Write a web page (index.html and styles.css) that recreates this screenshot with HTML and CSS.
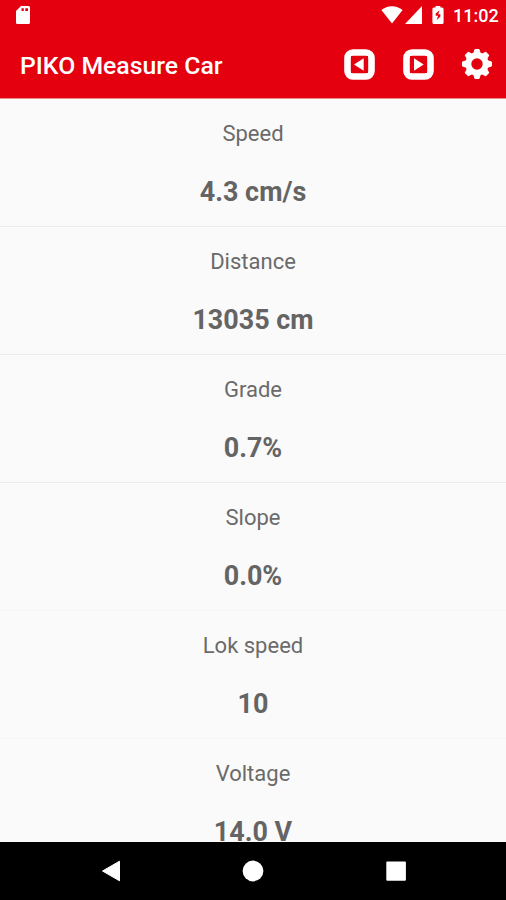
FILE: index.html
```html
<!DOCTYPE html>
<html lang="en">
<head>
<meta charset="utf-8">
<title>PIKO Measure Car</title>
<link rel="stylesheet" href="styles.css">
</head>
<body>
<div class="screen">
  <header class="header">
    <div class="status">
      <svg class="sd" width="14" height="18" viewBox="0 0 14 18"><path fill="#fff" fill-rule="evenodd" d="M5 0h7.500q1.500 0 1.500 1.500v15q0 1.500-1.500 1.500h-11q-1.500 0-1.500-1.500V5zM5.500 2.300v2.800h2.300v-2.800zM9.300 2.300v2.800h2.700v-2.800z"/></svg>
      <svg class="wifi" width="22" height="18" viewBox="0 0 22 18"><path fill="#fff" d="M11 17.500.4 4Q5 .2 11 .2T21.600 4z"/></svg>
      <svg class="signal" width="17" height="18" viewBox="0 0 17 18"><path fill="#fff" d="M17 0v18H0z"/></svg>
      <svg class="battery" width="12" height="18" viewBox="0 0 12 18"><path fill="#fff" fill-rule="evenodd" d="M3.600 0h4.800v1.500h1.700q1.500 0 1.500 1.500v13.500q0 1.500-1.500 1.500H1.900Q.4 18 .4 16.500V3q0-1.500 1.500-1.500h1.700zM7.600 4.200 3.700 7.500v2.300h2.400L4.600 14.200 8.400 10.600V8.200H6.200z"/></svg>
      <span class="clock">11:02</span>
    </div>
    <div class="toolbar">
      <h1 class="title">PIKO Measure Car</h1>
      <svg class="prev" width="31" height="31" viewBox="0 0 31 31"><rect x="3.500" y="3.500" width="24" height="24" rx="5.500" fill="none" stroke="#fff" stroke-width="6.600"/><path class="hole" d="M7 7h17v17H7z"/><path fill="#fff" d="M19.700 9.300v12.400L10 15.500z"/></svg>
      <svg class="next" width="31" height="31" viewBox="0 0 31 31"><rect x="3.500" y="3.500" width="24" height="24" rx="5.500" fill="none" stroke="#fff" stroke-width="6.600"/><path class="hole" d="M7 7h17v17H7z"/><path fill="#fff" d="M11 9.300v12.400l9.700-6.200z"/></svg>
      <svg class="gear" width="36" height="36" viewBox="-18 -18 36 36">
        <defs><path id="tooth" fill="#fff" stroke="#fff" stroke-linejoin="round" d="M-3.400-10l1.300-4.500h4.200l1.300 4.500z"/></defs>
        <circle r="8.700" fill="none" stroke="#fff" stroke-width="6"/>
        <use href="#tooth"/>
        <use href="#tooth" transform="rotate(45)"/>
        <use href="#tooth" transform="rotate(90)"/>
        <use href="#tooth" transform="rotate(135)"/>
        <use href="#tooth" transform="rotate(180)"/>
        <use href="#tooth" transform="rotate(225)"/>
        <use href="#tooth" transform="rotate(270)"/>
        <use href="#tooth" transform="rotate(315)"/>
      </svg>
    </div>
  </header>
  <main class="list">
    <section class="row"><div class="label">Speed</div><div class="value">4.3 cm/s</div></section>
    <section class="row"><div class="label">Distance</div><div class="value">13035 cm</div></section>
    <section class="row"><div class="label">Grade</div><div class="value">0.7%</div></section>
    <section class="row faint"><div class="label">Slope</div><div class="value">0.0%</div></section>
    <section class="row faint"><div class="label">Lok speed</div><div class="value">10</div></section>
    <section class="row"><div class="label">Voltage</div><div class="value">14.0 V</div></section>
  </main>
  <nav class="nav">
    <svg width="22" height="22" viewBox="0 0 22 22"><path fill="#fff" stroke="#fff" stroke-linejoin="round" d="M19.500 1.200v19.600L2.500 11z"/></svg>
    <svg width="22" height="22" viewBox="0 0 22 22"><circle cx="11" cy="11" r="10.400" fill="#fff"/></svg>
    <svg width="22" height="22" viewBox="0 0 22 22"><rect x="1.300" y="1.500" width="19.600" height="19.300" rx="1" fill="#fff"/></svg>
  </nav>
</div>
</body>
</html>
```
FILE: styles.css
```css
body {
  margin: 0;
  font-family: Roboto, "Liberation Sans", sans-serif;
}
.screen {
  display: flex;
  flex-direction: column;
  height: 900px;
  overflow: hidden;
  background: #fafafa;
}
.header {
  flex: none;
  height: 98px;
  background: #e4000f;
  color: #fff;
  border-bottom: 1px solid #ee8a8c;
}
.status {
  display: flex;
  align-items: center;
  height: 30px;
  padding: 0 9px 0 16px;
}
.wifi { margin-left: auto; }
.signal { margin-left: 2px; }
.battery { margin-left: 10px; }
.clock {
  width: 44px;
  margin-left: 9px;
  padding-top: 2px;
  font-size: 18px;
  font-weight: 500;
  line-height: 20px;
  white-space: nowrap;
}
.toolbar {
  display: flex;
  align-items: center;
  height: 68px;
  padding: 0 11px 0 20px;
}
.title {
  margin: 0 auto 0 0;
  padding-top: 3px;
  font-size: 24.800px;
  font-weight: 500;
  line-height: 30px;
}
.next { margin-left: 28px; }
.gear { margin-left: 25px; }
.hole { fill: #e4000f; }
.list {
  flex: 1;
  min-height: 0;
  overflow: hidden;
}
.row {
  box-sizing: border-box;
  height: 128px;
  padding-top: 21px;
  border-bottom: 1px solid #ebebeb;
  text-align: center;
  color: #646464;
}
.faint { border-bottom-color: #f5f5f5; }
.label {
  color: #6a6a6a;
  font-size: 22px;
  line-height: 28px;
}
.value {
  margin-top: 28px;
  font-size: 26.900px;
  font-weight: 700;
  line-height: 32px;
}
.nav {
  flex: none;
  display: flex;
  justify-content: center;
  align-items: center;
  gap: 120.500px;
  height: 58px;
  background: #000;
}
```
